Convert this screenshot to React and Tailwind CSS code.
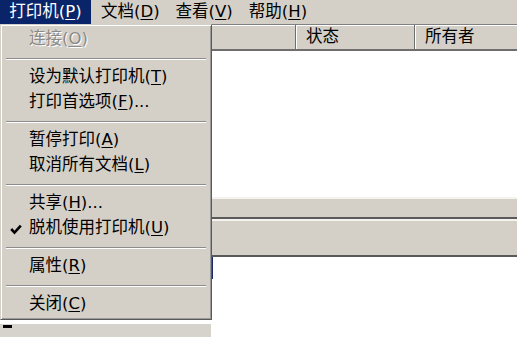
import React from 'react';

const font = { fontFamily: '"DejaVu Sans", "Noto Sans CJK SC", sans-serif' };

function Label({ text, hotkey, tail = '' }) {
  return (
    <span>
      {text}(<u className="underline-offset-2">{hotkey}</u>){tail}
    </span>
  );
}

const menuBar = [
  { text: '打印机', hotkey: 'P', active: true },
  { text: '文档', hotkey: 'D' },
  { text: '查看', hotkey: 'V' },
  { text: '帮助', hotkey: 'H' },
];

// menu entries, 'sep' = separator line
const entries = [
  { text: '连接', hotkey: 'O', disabled: true },
  'sep',
  { text: '设为默认打印机', hotkey: 'T' },
  { text: '打印首选项', hotkey: 'F', tail: '...' },
  'sep',
  { text: '暂停打印', hotkey: 'A' },
  { text: '取消所有文档', hotkey: 'L' },
  'sep',
  { text: '共享', hotkey: 'H', tail: '...' },
  { text: '脱机使用打印机', hotkey: 'U', checked: true },
  'sep',
  { text: '属性', hotkey: 'R' },
  'sep',
  { text: '关闭', hotkey: 'C' },
];

function MenuItem({ item }) {
  return (
    <div className="relative flex h-[25px] items-center pl-[26px]">
      {item.checked && (
        <svg className="absolute left-[7px] top-[8px]" width="12" height="11" viewBox="0 0 12 11">
          <path d="M1.2 5 L4.5 8.6 L10.8 1.6" fill="none" stroke="#000" strokeWidth="2.6" />
        </svg>
      )}
      {item.disabled ? (
        <span className="text-[#8a8a8a] [text-shadow:1px_1px_0_#fff]">
          <Label text={item.text} hotkey={item.hotkey} tail={item.tail} />
        </span>
      ) : (
        <span className="text-black">
          <Label text={item.text} hotkey={item.hotkey} tail={item.tail} />
        </span>
      )}
    </div>
  );
}

function Separator() {
  return (
    <div className="flex h-[13px] items-center px-[3px]">
      <div className="h-[2px] w-full border-t border-t-[#8c8c8c] border-b border-b-white" />
    </div>
  );
}

export default function App() {
  return (
    <div className="relative h-[340px] w-[517px] overflow-hidden bg-white text-[16.5px] leading-none" style={font}>
      {/* Menu bar */}
      <div className="flex h-[24px] items-stretch bg-[#d4d0c8]">
        {menuBar.map((m) => (
          <div
            key={m.text}
            className={
              m.active
                ? 'flex w-[91px] items-center justify-center bg-[#0a246a] text-white'
                : 'flex items-center pl-[10px] pr-[6px] text-black'
            }
          >
            <Label text={m.text} hotkey={m.hotkey} />
          </div>
        ))}
      </div>

      {/* Window body */}
      <div className="flex h-[316px] flex-col">
        {/* Column header */}
        <div className="flex h-[27px] border-t border-t-[#808080] bg-[#d4d0c8] border-b-2 border-b-[#6e6e6e]">
          <div className="w-[296px] border-r border-r-[#6e6e6e] shadow-[inset_1px_1px_0_#fff]" />
          <div className="flex w-[119px] items-center pl-[10px] border-r border-r-[#6e6e6e] shadow-[inset_1px_1px_0_#fff]">
            状态
          </div>
          <div className="flex flex-1 items-center pl-[10px] shadow-[inset_1px_1px_0_#fff]">所有者</div>
        </div>

        {/* List */}
        <div className="h-[146px] bg-white" />

        {/* Status strips */}
        <div className="h-[22px] border-t-2 border-t-[#f4f3f0] bg-[#d4d0c8] border-b-2 border-b-[#5a5a5a]" />
        <div className="h-[38px] border-t-2 border-t-[#f4f3f0] bg-[#d4d0c8] border-b-2 border-b-[#5a5a5a]" />

        {/* Lower pane */}
        <div className="flex flex-1 bg-white">
          <div className="flex w-[211px] flex-col justify-end pb-[3px]">
            <div className="h-[13px] bg-[#d6d3cc]">
              <div className="ml-[3px] mt-[1px] h-[3px] w-[9px] bg-black" />
            </div>
          </div>
          <div className="h-[22px] w-[2px] bg-[#1c2a6a]" />
        </div>
      </div>

      {/* Dropdown menu */}
      <div className="absolute left-0 top-[24px] w-[212px] border border-[#d4d0c8] border-r-[#5a5a5a] border-b-[#5a5a5a] bg-[#d4d0c8] p-[2px] shadow-[inset_1px_1px_0_#fff,inset_-1px_-1px_0_#9a9a9a]">
        {entries.map((e, i) => (e === 'sep' ? <Separator key={i} /> : <MenuItem key={i} item={e} />))}
      </div>
    </div>
  );
}
